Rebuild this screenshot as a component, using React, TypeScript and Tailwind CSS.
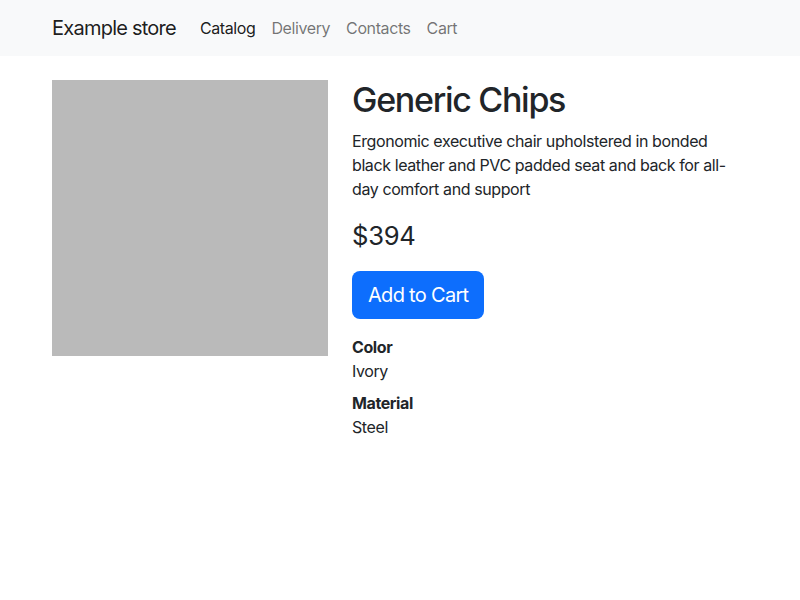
const links = [
  { label: "Catalog", active: true },
  { label: "Delivery" },
  { label: "Contacts" },
  { label: "Cart" },
];

const specs = [
  { name: "Color", value: "Ivory" },
  { name: "Material", value: "Steel" },
];

export default function App() {
  return (
    <div
      className="min-h-screen bg-white tracking-[-0.025em] text-[#212529]"
      style={{ fontFamily: "Inter, 'Noto Sans', sans-serif" }}
    >
      <nav className="h-14 bg-[#f8f9fa]">
        <div className="mx-auto flex h-full w-[720px] items-center px-3">
          <span className="mr-4 text-[20px] leading-[30px] tracking-[-0.038em] text-black/90">Example store</span>
          <div className="flex">
            {links.map((l) => (
              <a key={l.label} className={(l.active ? "text-black/90" : "text-black/55") + " px-2 text-base leading-6"}>
                {l.label}
              </a>
            ))}
          </div>
        </div>
      </nav>

      <main className="mx-auto mt-6 flex w-[720px]">
        <div className="w-[300px] px-3">
          <div className="h-[276px] w-[276px] bg-[#bababa]" />
        </div>
        <div className="w-[420px] px-3">
          <h1 className="mb-2 text-[34px] font-medium leading-[40.8px] tracking-[-0.038em]">Generic Chips</h1>
          <p className="mb-4 text-base leading-6">
            Ergonomic executive chair upholstered in bonded black leather and PVC padded seat and back for all-day comfort and support
          </p>
          <p className="mb-4 text-[25.6px] leading-[38px] tracking-[-0.01em]">$394</p>
          <button
            type="button"
            className="h-12 rounded-lg bg-[#0d6efd] px-4 text-[20px] leading-[30px] tracking-[-0.035em] text-white"
          >
            Add to Cart
          </button>
          <dl className="mt-4">
            {specs.map((s) => (
              <div key={s.name} className="mb-2">
                <dt className="text-base font-bold leading-6">{s.name}</dt>
                <dd className="text-base leading-6">{s.value}</dd>
              </div>
            ))}
          </dl>
        </div>
      </main>
    </div>
  );
}
